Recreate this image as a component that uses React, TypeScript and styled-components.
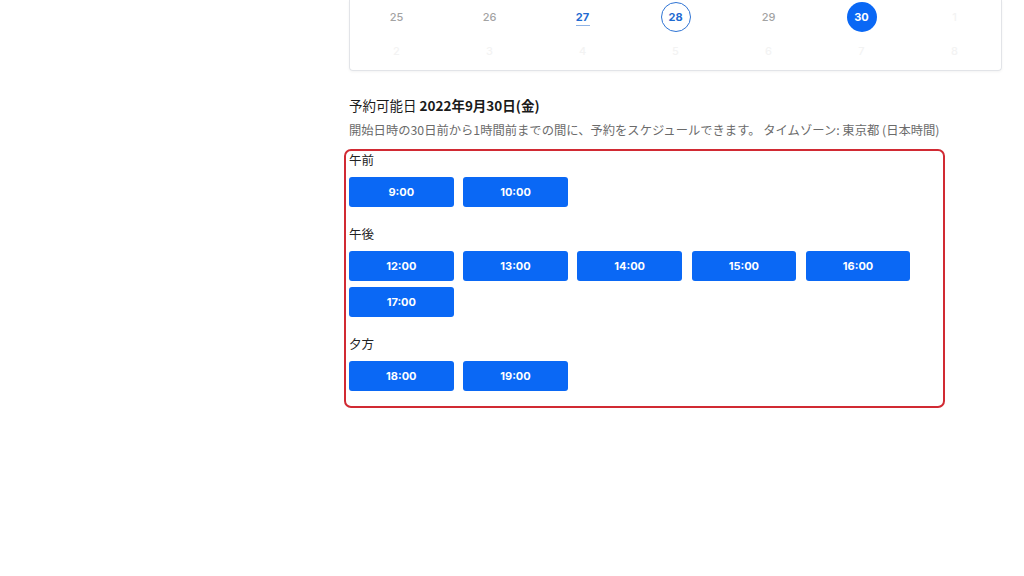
import styled, { createGlobalStyle } from 'styled-components';

const GlobalStyle = createGlobalStyle`
  body {
    margin: 0;
    background: #ffffff;
    font-family: 'Noto Sans CJK JP', 'Noto Sans', sans-serif;
    color: #222;
  }
`;

type DayState = 'muted' | 'faint' | 'today' | 'ring' | 'selected';

interface DayType {
  label: string;
  state: DayState;
}

const weeks: DayType[][] = [
  [
    { label: '25', state: 'muted' },
    { label: '26', state: 'muted' },
    { label: '27', state: 'today' },
    { label: '28', state: 'ring' },
    { label: '29', state: 'muted' },
    { label: '30', state: 'selected' },
    { label: '1', state: 'faint' },
  ],
  ['2', '3', '4', '5', '6', '7', '8'].map((d) => ({ label: d, state: 'faint' as DayState })),
];

const slotGroups = [
  { title: '午前', times: ['9:00', '10:00'] },
  { title: '午後', times: ['12:00', '13:00', '14:00', '15:00', '16:00', '17:00'] },
  { title: '夕方', times: ['18:00', '19:00'] },
];

const App = () => {
  return (
    <>
      <GlobalStyle />
      <Page>
        <Column>
          <Calendar>
            {weeks.map((week, w) => (
              <Week key={w} first={w == 0}>
                {week.map((day, i) => (
                  <Cell key={i}>
                    <Day state={day.state}>{day.label}</Day>
                  </Cell>
                ))}
              </Week>
            ))}
          </Calendar>

          <Heading>
            予約可能日 <b>2022年9月30日(金)</b>
          </Heading>
          <Note>開始日時の30日前から1時間前までの間に、予約をスケジュールできます。 タイムゾーン: 東京都 (日本時間)</Note>

          <SlotBox>
            {slotGroups.map((group, g) => (
              <Group key={group.title} first={g == 0}>
                <GroupTitle>{group.title}</GroupTitle>
                <SlotGrid>
                  {group.times.map((t) => (
                    <SlotButton key={t}>{t}</SlotButton>
                  ))}
                </SlotGrid>
              </Group>
            ))}
          </SlotBox>
        </Column>
      </Page>
    </>
  );
};

const Page = styled.div`
  width: 1024px;
  height: 576px;
  overflow: hidden;
  display: flex;
`;

const Column = styled.div`
  margin-left: 349px;
  width: 653px;
  display: flex;
  flex-direction: column;
`;

const Calendar = styled.div`
  border: 1px solid #e2e4e8;
  border-top: none;
  border-radius: 0 0 4px 4px;
  box-shadow: 0 1px 3px rgba(0, 0, 0, 0.05);
  padding-bottom: 1px;
`;

const Week = styled.div<{ first: boolean }>`
  display: grid;
  grid-template-columns: repeat(7, 1fr);
  height: ${(p) => (p.first ? '33px' : '36px')};
  align-items: center;
`;

const Cell = styled.div`
  display: flex;
  justify-content: center;
`;

const Day = styled.span<{ state: DayState }>`
  position: relative;
  width: 30px;
  height: 30px;
  box-sizing: border-box;
  border-radius: 50%;
  display: flex;
  align-items: center;
  justify-content: center;
  font-family: Inter, 'Noto Sans', sans-serif;
  font-size: 11px;
  font-weight: ${(p) => (p.state == 'muted' || p.state == 'faint' ? 500 : 700)};
  color: ${(p) =>
    p.state == 'muted'
      ? '#a3a3a3'
      : p.state == 'faint'
      ? '#f3f3f3'
      : p.state == 'selected'
      ? '#ffffff'
      : '#1f6bd1'};
  background: ${(p) => (p.state == 'selected' ? '#0a68f5' : 'transparent')};
  border: ${(p) => (p.state == 'ring' ? '1px solid #2f74d4' : 'none')};
  &::after {
    content: '';
    display: ${(p) => (p.state == 'today' ? 'block' : 'none')};
    position: absolute;
    left: 8px;
    right: 8px;
    bottom: 6px;
    height: 1px;
    background: #8fb3e6;
  }
`;

const Heading = styled.div`
  margin-top: 25px;
  font-size: 13.5px;
  line-height: 18px;
  color: #1a1a1a;
  b {
    font-weight: 700;
  }
`;

const Note = styled.div`
  margin-top: 8px;
  font-size: 12.3px;
  line-height: 17px;
  color: #6b6b6b;
  white-space: nowrap;
`;

const SlotBox = styled.div`
  margin-top: 10px;
  margin-left: -5px;
  width: 601px;
  box-sizing: border-box;
  border: 2px solid #d12a33;
  border-radius: 7px;
  padding: 0 3px 15px 3px;
`;

const Group = styled.div<{ first: boolean }>`
  margin-top: ${(p) => (p.first ? '0' : '18px')};
`;

const GroupTitle = styled.div`
  font-size: 12.5px;
  line-height: 18px;
  color: #222;
  margin-bottom: 8px;
`;

const SlotGrid = styled.div`
  display: flex;
  flex-wrap: wrap;
  gap: 6px 9.6px;
`;

const SlotButton = styled.button`
  width: 104.6px;
  height: 30px;
  border: none;
  border-radius: 3px;
  background: #0a68f5;
  color: #ffffff;
  font-family: Inter, 'Noto Sans', sans-serif;
  font-size: 11px;
  font-weight: 700;
  padding: 0;
  cursor: pointer;
`;

export default App;
